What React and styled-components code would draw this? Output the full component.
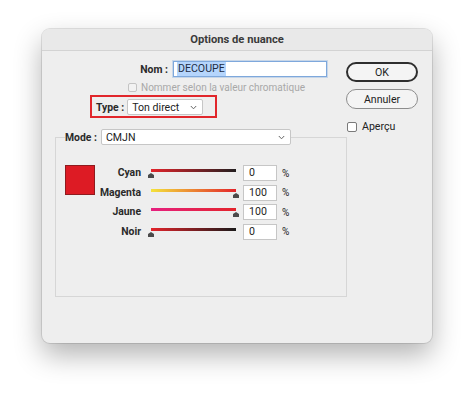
import React from "react";
import styled, { createGlobalStyle } from "styled-components";

const Global = createGlobalStyle`
  html, body { margin: 0; padding: 0; background: #ffffff; }
  body { font-family: Roboto, "Liberation Sans", Arial, sans-serif; font-size: 10px; color: #222; }
  * { box-sizing: border-box; }
`;

const Page = styled.div`
  width: 474px;
  height: 399px;
  padding: 29px 0 0 42px;
`;

const Window = styled.div`
  width: 390px;
  height: 314px;
  background: #eeeeee;
  border-radius: 8px;
  box-shadow: 0 0 0 1px rgba(0, 0, 0, 0.1), 0 12px 28px rgba(0, 0, 0, 0.3);
  overflow: hidden;
`;

const TitleBar = styled.div`
  height: 22px;
  border-bottom: 1px solid #d3d3d3;
  background: #e9e9e9;
  display: flex;
  align-items: center;
  justify-content: center;
  font-weight: 700;
  font-size: 11.2px;
  color: #3a3a3a;
`;

const Body = styled.div`
  display: flex;
  padding: 10px 0 0 13px;
`;

const LeftCol = styled.div`
  width: 291px;
  display: flex;
  flex-direction: column;
`;

const RightCol = styled.div`
  width: 74px;
  display: flex;
  flex-direction: column;
  padding-top: 1px;
`;

const Row = styled.div`
  display: flex;
  align-items: center;
  height: ${(p) => p.$h || 16}px;
  gap: ${(p) => p.$gap || 0}px;
  padding-left: ${(p) => p.$indent || 0}px;
  margin-top: ${(p) => p.$mt || 0}px;
`;

const Label = styled.label`
  font-weight: 700;
  font-size: 10.4px;
  color: #2a2a2a;
  width: ${(p) => (p.$w ? p.$w + "px" : "auto")};
  text-align: ${(p) => (p.$w ? "right" : "left")};
  white-space: nowrap;
`;

const TextInput = styled.div`
  width: ${(p) => p.$w}px;
  height: 16px;
  background: #fff;
  border: 1px solid ${(p) => (p.$focus ? "#7ea8dc" : "#c6c6c6")};
  box-shadow: ${(p) => (p.$focus ? "0 0 0 1px rgba(126,168,220,0.35)" : "none")};
  display: flex;
  align-items: center;
  padding-left: ${(p) => p.$pl || 3}px;
  color: #1e1e1e;
  font-size: 10.6px;
  line-height: 14px;
`;

const Selected = styled.span`
  background: #b5d5fc;
  padding: 0 1px;
  color: #1f2d44;
`;

const Check = styled.span`
  width: ${(p) => p.$size || 10}px;
  height: ${(p) => p.$size || 10}px;
  border: 1px solid ${(p) => (p.$disabled ? "#c4c4c4" : "#7a7a7a")};
  border-radius: 2px;
  background: ${(p) => (p.$disabled ? "#f2f2f2" : "#fff")};
  flex: none;
`;

const Muted = styled.span`
  color: #a8a8a8;
  white-space: nowrap;
`;

const Highlight = styled.div`
  margin-top: 2px;
  margin-left: 35px;
  width: 127px;
  height: 23px;
  border: 2px solid #e1262b;
  padding: 2px 0 1px 4px;
  display: flex;
  align-items: center;
  gap: 3px;
`;

const SelectBox = styled.div`
  width: ${(p) => p.$w}px;
  height: 16px;
  background: #fff;
  border: 1px solid #c6c6c6;
  border-radius: 2px;
  display: flex;
  align-items: center;
  justify-content: space-between;
  padding: 0 5px 0 4px;
  color: #222;
  font-size: 10.6px;
`;

const Chevron = () => (
  <svg width="7" height="5" viewBox="0 0 7 5">
    <path d="M0.8 1 L3.5 3.8 L6.2 1" fill="none" stroke="#666" strokeWidth="1" />
  </svg>
);

const Group = styled.fieldset`
  margin: 11px 0 0 0;
  padding: 0 0 0 9px;
  width: 292px;
  height: 168px;
  border: 1px solid #d6d6d6;
  display: block;
  min-width: 0;
`;

const Legend = styled.legend`
  padding: 0;
  display: flex;
  align-items: center;
  gap: 4px;
  height: 16px;
`;

const GroupInner = styled.div`
  display: flex;
  padding-top: 20px;
`;

const Swatch = styled.div`
  width: 30px;
  height: 30px;
  background: ${(p) => p.$color};
  border: 1px solid #8e1b1e;
  flex: none;
`;

const SliderGrid = styled.div`
  display: grid;
  grid-template-columns: 46px 96px 34px auto;
  column-gap: 3px;
  row-gap: 3.67px;
  align-items: center;
`;

const SliderLabel = styled.span`
  text-align: right;
  font-weight: 700;
  font-size: 10.4px;
  color: #2a2a2a;
  line-height: 16px;
`;

const Slider = styled.div`
  height: 16px;
  padding: 0 4px;
  margin-left: 3px;
`;

const TrackWrap = styled.div`
  position: relative;
  height: 16px;
`;

const Track = styled.div`
  position: absolute;
  top: 4px;
  left: 0;
  right: 0;
  height: 3px;
  background: linear-gradient(to right, ${(p) => p.$from}, ${(p) => p.$to});
`;

const Thumb = styled.svg`
  position: absolute;
  top: 8px;
  margin-left: -3px;
`;

const Pct = styled.span`
  margin-left: 2px;
  color: #222;
`;

const Button = styled.div`
  width: 72px;
  height: 20px;
  border-radius: 10px;
  border: ${(p) => (p.$default ? "2px solid #2e2e2e" : "1px solid #8d8d8d")};
  background: #f4f4f4;
  display: flex;
  align-items: center;
  justify-content: center;
  color: #222;
  font-size: 10.6px;
  margin-top: ${(p) => p.$mt || 0}px;
`;

const Preview = styled.div`
  display: flex;
  align-items: center;
  gap: 5px;
  margin-top: 11px;
  padding-left: 1px;
  font-size: 10.6px;
`;

const sliders = [
  { name: "Cyan", value: 0, from: "#e3242b", to: "#231f20" },
  { name: "Magenta", value: 100, from: "#f4e33c", to: "#e3242b" },
  { name: "Jaune", value: 100, from: "#e6217f", to: "#e3242b" },
  { name: "Noir", value: 0, from: "#e3242b", to: "#1a1a1a" },
];

export default function App() {
  return (
    <>
      <Global />
      <Page>
        <Window>
          <TitleBar>Options de nuance</TitleBar>
          <Body>
            <LeftCol>
              <Row $gap={5}>
                <Label $w={113}>Nom :</Label>
                <TextInput $w={154} $focus>
                  <Selected>DECOUPE</Selected>
                </TextInput>
              </Row>
              <Row $gap={4} $indent={73} $mt={4} $h={12}>
                <Check $disabled $size={9} />
                <Muted>Nommer selon la valeur chromatique</Muted>
              </Row>
              <Highlight>
                <Label>Type :</Label>
                <SelectBox $w={76}>
                  <span>Ton direct</span>
                  <Chevron />
                </SelectBox>
              </Highlight>
              <Group>
                <Legend>
                  <Label>Mode :</Label>
                  <SelectBox $w={190}>
                    <span>CMJN</span>
                    <Chevron />
                  </SelectBox>
                </Legend>
                <GroupInner>
                  <Swatch $color="#dd1b24" />
                  <SliderGrid>
                    {sliders.map((s) => (
                      <React.Fragment key={s.name}>
                        <SliderLabel>{s.name}</SliderLabel>
                        <Slider>
                          <TrackWrap>
                            <Track $from={s.from} $to={s.to} />
                            <Thumb
                              width="6"
                              height="5"
                              viewBox="0 0 6 5"
                              style={{ left: `${s.value}%` }}
                            >
                              <path d="M3 0 L6 2 L6 5 L0 5 L0 2 Z" fill="#4b4b4b" />
                            </Thumb>
                          </TrackWrap>
                        </Slider>
                        <TextInput $w={34} $pl={5}>
                          {s.value}
                        </TextInput>
                        <Pct>%</Pct>
                      </React.Fragment>
                    ))}
                  </SliderGrid>
                </GroupInner>
              </Group>
            </LeftCol>
            <RightCol>
              <Button $default>OK</Button>
              <Button $mt={7}>Annuler</Button>
              <Preview>
                <Check $size={10} />
                <span>Aperçu</span>
              </Preview>
            </RightCol>
          </Body>
        </Window>
      </Page>
    </>
  );
}
